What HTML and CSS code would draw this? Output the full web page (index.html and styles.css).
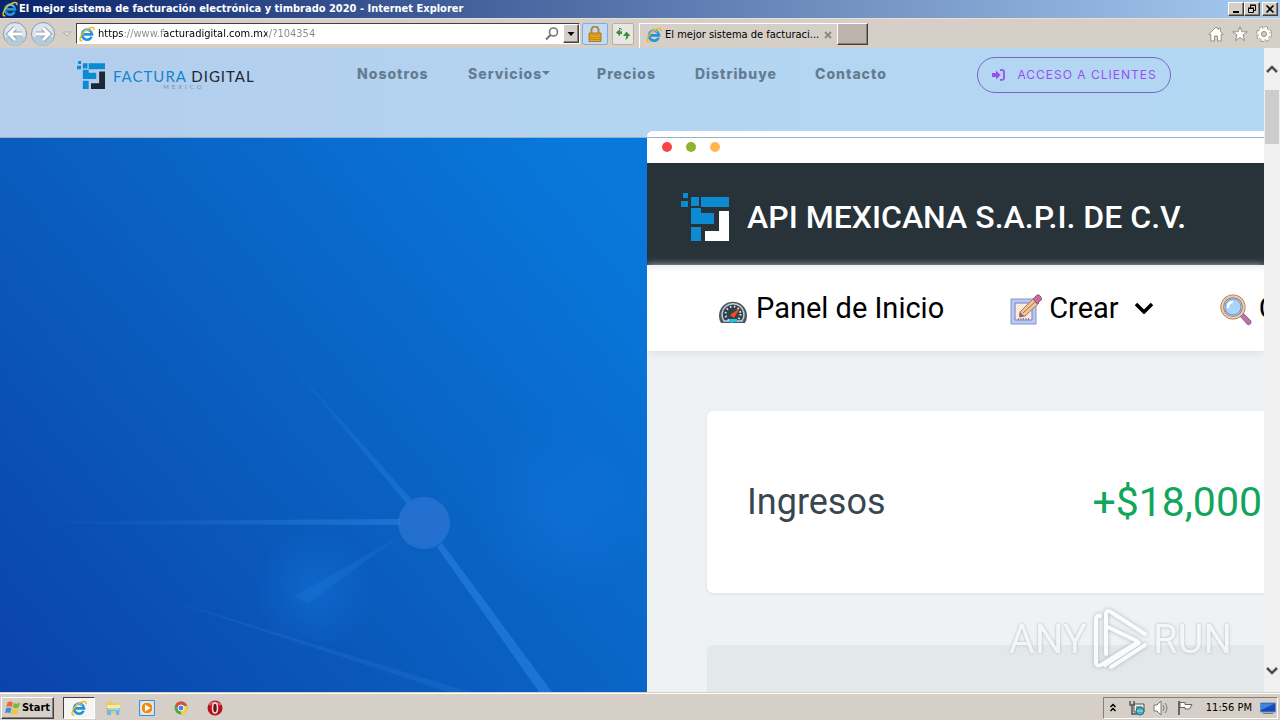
FILE: index.html
```html
<!DOCTYPE html>
<html lang="es">

<head>
    <meta charset="UTF-8">
    <meta name="viewport" content="width=device-width, initial-scale=1.0">
    <title>El mejor sistema de facturación electrónica y timbrado 2020</title>
    <link rel="stylesheet" href="styles.css">
</head>

<body>
    <svg class="sprite" aria-hidden="true">
        <symbol id="ie" viewBox="0 0 16 16">
            <path d="M12.6 10.7A5 5 0 1 1 13 8.4H4.6" fill="none" stroke="#2493d8" stroke-width="2.6"/>
            <path d="M4 6.4A4.5 4.5 0 0 1 11.500 5.200" fill="none" stroke="#8fd6f8" stroke-width="1"/>
            <path d="M3.400 14.700C-.5 15.800 .6 9.500 6.200 4.800 11 .7 16 .2 14.800 4.300" fill="none" stroke="#f0bc25" stroke-width="1.500"/>
        </symbol>
        <symbol id="fd" viewBox="0 0 48 48">
            <g fill="#0c8bd2">
                <path d="M2 0h5v5H2zM0 8h7v6H0zM10 4h8v9h-8zM20 4h28v10H20zM10 15h10v5h13v11H10zM10 34h10v14H10z"/>
            </g>
            <path class="fd-corner" d="M38 18h10v30H24V38h14z"/>
        </symbol>
    </svg>

    <div class="titlebar">
        <svg class="icon16"><use href="#ie"/></svg>
        <span class="titlebar-text">El mejor sistema de facturación electrónica y timbrado 2020 - Internet Explorer</span>
        <div class="window-buttons">
            <button class="classic" aria-label="Minimizar"><svg viewBox="0 0 14 12"><path d="M4 9h6" stroke="#000" stroke-width="2"/></svg></button>
            <button class="classic" aria-label="Restaurar"><svg viewBox="0 0 14 12"><path d="M5.500 5V2.500h5v5H9M5 2h6M3.500 5.500h5v4h-5zM3 5h6" fill="none" stroke="#000"/></svg></button>
            <button class="classic close" aria-label="Cerrar"><svg viewBox="0 0 14 12"><path d="M3.500 2.500l7 7M10.500 2.500l-7 7" stroke="#000" stroke-width="1.600"/></svg></button>
        </div>
    </div>

    <div class="toolbar">
        <div class="history">
            <button aria-label="Atrás"><svg viewBox="0 0 26 26"><circle cx="13" cy="13" r="11.500" fill="#dce5ee" stroke="#8d98a3"/><path d="M3 16a10 9 0 0 0 20 0z" fill="#b4cbd9"/><path d="M13 7l-6 6 6 6M7.500 13H20" fill="none" stroke="#8ba0b2" stroke-width="5"/><path d="M13 7l-6 6 6 6M7.500 13H20" fill="none" stroke="#fff" stroke-width="3"/></svg></button>
            <button aria-label="Adelante"><svg viewBox="0 0 26 26"><circle cx="13" cy="13" r="11.500" fill="#dce5ee" stroke="#8d98a3"/><path d="M3 16a10 9 0 0 0 20 0z" fill="#b4cbd9"/><path d="M13 7l6 6-6 6M18.500 13H6" fill="none" stroke="#8ba0b2" stroke-width="5"/><path d="M13 7l6 6-6 6M18.500 13H6" fill="none" stroke="#fff" stroke-width="3"/></svg></button>
            <button class="history-menu" aria-label="Historial"><svg viewBox="0 0 10 6"><path d="M1 1h8L5 5z" fill="#e4dee0" stroke="#b5abb0"/></svg></button>
        </div>
        <div class="address">
            <svg class="icon16"><use href="#ie"/></svg>
            <input class="url" type="text" aria-label="Dirección" value="https://www.facturadigital.com.mx/?104354">
            <svg class="icon16" viewBox="0 0 16 16"><circle cx="9.500" cy="6" r="4" fill="none" stroke="#777" stroke-width="1.600"/><path d="M6.500 9L2 13.500" stroke="#777" stroke-width="2.200"/></svg>
            <button class="classic drop" aria-label="Mostrar direcciones"><svg viewBox="0 0 14 16"><path d="M3.500 6h7L7 10z"/></svg></button>
        </div>
        <button class="tool lock" aria-label="Seguridad"><svg class="icon16" viewBox="0 0 16 16"><path d="M4.500 8V4a3.500 3.500 0 0 1 7 0v4" fill="none" stroke="#a98b3c" stroke-width="2"/><path d="M2 7h12v8.500H2z" fill="#eba91d" stroke="#9b6b12" stroke-width=".8"/><path d="M2.500 9h11M2.500 11.500h11M2.500 13.500h11" stroke="#b77a10" stroke-width=".7"/></svg></button>
        <button class="tool" aria-label="Actualizar"><svg class="icon16" viewBox="0 0 16 16"><path d="M1 6.500L5 3v2.300h2V8H5v2.300z" fill="#36913f"/><path d="M4 3l1-1 2 2" stroke="#36913f" fill="none"/><path d="M11.500 5.500L15.500 10h-2.300c.2 2-1 3.500-3.200 3.500 1-1 1.200-2 1-3.500H8z" fill="#36913f"/></svg></button>
        <div class="tab">
            <svg class="icon16"><use href="#ie"/></svg>
            <span class="tab-title">El mejor sistema de facturaci...</span>
            <button class="tab-close" aria-label="Cerrar pestaña"><svg viewBox="0 0 8 8"><path d="M1 1l6 6M7 1L1 7" stroke="#8b8783" stroke-width="1.800"/></svg></button>
        </div>
        <button class="classic new-tab" aria-label="Nueva pestaña"></button>
        <div class="tools">
            <button aria-label="Inicio"><svg class="icon16" viewBox="0 0 16 16"><path d="M8 1L.8 8.300h2V15h3.700v-5h3v5h3.700V8.300h2L12.500 5.500V2.200h-2v1.300z" fill="#fff" stroke="#8c8780" stroke-width=".9"/></svg></button>
            <button aria-label="Favoritos"><svg class="icon16" viewBox="0 0 16 16"><path d="M8 .8l1.900 5h5.400L11 9l1.600 5.700L8 11.400l-4.600 3.300L5 9 .7 5.800h5.400z" fill="#fff" stroke="#8c8780" stroke-width=".9"/></svg></button>
            <button aria-label="Herramientas"><svg class="icon16" viewBox="0 0 16 16"><circle cx="8" cy="8" r="6.200" fill="none" stroke="#8c8780" stroke-width="3.500" stroke-dasharray="2.900 1.970"/><circle cx="8" cy="8" r="6" fill="none" stroke="#fff" stroke-width="2.500" stroke-dasharray="2.300 2.410"/><circle cx="8" cy="8" r="4" fill="#d6cfc7" stroke="#fff" stroke-width="3"/><circle cx="8" cy="8" r="2.500" fill="none" stroke="#8c8780"/></svg></button>
        </div>
    </div>

    <div class="viewport">
        <div class="page">
            <header class="site-header">
                <a class="brand" href="#">
                    <svg class="brand-mark"><use href="#fd"/></svg>
                    <span class="brand-name"><span class="brand-blue">FACTURA</span> DIGITAL<small>MEXICO</small></span>
                </a>
                <nav class="site-nav">
                    <a href="#">Nosotros</a>
                    <a class="has-menu" href="#">Servicios</a>
                    <a href="#">Precios</a>
                    <a href="#">Distribuye</a>
                    <a href="#">Contacto</a>
                </nav>
                <a class="login" href="#">
                    <svg viewBox="0 0 14 12"><path d="M1 4h4V1.500L9.500 6 5 10.500V8H1z" fill="#9a4df0"/><path d="M9 1.200h2.500q1.500 0 1.500 1.500v6.600q0 1.500-1.500 1.500H9" fill="none" stroke="#9a4df0" stroke-width="1.800"/></svg>
                    ACCESO A CLIENTES
                </a>
            </header>

            <main class="hero">
                <svg class="network" viewBox="0 138 647 554" preserveAspectRatio="xMidYMid slice" aria-hidden="true">
                    <defs>
                        <linearGradient id="fadeLeft" gradientUnits="userSpaceOnUse" x1="40" y1="0" x2="400" y2="0"><stop offset="0" stop-color="#2e86e0" stop-opacity="0"/><stop offset="1" stop-color="#2e86e0" stop-opacity=".5"/></linearGradient>
                        <linearGradient id="fadeUp" gradientUnits="userSpaceOnUse" x1="270" y1="340" x2="410" y2="505"><stop offset="0" stop-color="#2e86e0" stop-opacity="0"/><stop offset="1" stop-color="#2e86e0" stop-opacity=".4"/></linearGradient>
                        <radialGradient id="glow"><stop offset="0" stop-color="#1274da" stop-opacity=".5"/><stop offset="1" stop-color="#1274da" stop-opacity="0"/></radialGradient>
                    </defs>
                    <circle cx="565" cy="510" r="90" fill="url(#glow)"/>
                    <circle cx="315" cy="590" r="60" fill="url(#glow)"/>
                    <path d="M30 521.500L400 519v6L30 524z" fill="url(#fadeLeft)"/>
                    <path d="M270 340l142 160-5 4z" fill="url(#fadeUp)"/>
                    <path d="M402 535L295 596l12 8z" fill="#2e86e0" opacity=".2"/>
                    <path d="M160 597l310 95h-22z" fill="#2e86e0" opacity=".22"/>
                    <path d="M437 547l5-4 110 149h-13z" fill="#2882e2" opacity=".6"/>
                    <circle cx="424" cy="523" r="26" fill="#3b7ddb" opacity=".5"/>
                </svg>

                <section class="app">
                    <div class="app-dots"><i class="red"></i><i class="green"></i><i class="amber"></i></div>
                    <div class="app-head">
                        <svg class="app-logo"><use href="#fd"/></svg>
                        <h2>API MEXICANA S.A.P.I. DE C.V.</h2>
                    </div>
                    <div class="app-menu">
                        <a href="#">
                            <svg class="menu-icon" viewBox="0 0 32 32"><path d="M4 29a14 14 0 1 1 24 0z" fill="#465a65"/><path d="M7 27a11 11 0 1 1 18 0z" fill="#33434c" stroke="#c7d0d5" stroke-width="1.500"/><circle cx="16" cy="20" r="7.500" fill="none" stroke="#dbe3e7" stroke-width="2" stroke-dasharray="1.500 2.500"/><path d="M13 21l10-7-6 10z" fill="#f4511e"/><path d="M12 25h8v3h-8z" fill="#18c5e8"/></svg>
                            Panel de Inicio
                        </a>
                        <a href="#">
                            <svg class="menu-icon" viewBox="0 0 32 32"><path d="M1 5h25v25H1z" fill="#bac8f4" stroke="#8792c8"/><path d="M5 9h17v17H5z" fill="#fbe9dc" stroke="#7180bf"/><path d="M8 25h12" stroke="#7180bf" stroke-dasharray="1 1.500" stroke-width="2"/><path d="M10 18L24 4l5 5-14 13-5 1z" fill="#eec98e" stroke="#a36f68"/><path d="M23 5l4-4q2-1 4 2t-1 4l-3 3z" fill="#c66f95" stroke="#9c5b87"/><path d="M13 19L26 7" stroke="#a36f68"/><path d="M10 18l4 4-5 1z" fill="#9c5b70"/></svg>
                            Crear
                            <svg class="chevron" viewBox="0 0 20 12"><path d="M2 2l8 8 8-8" fill="none" stroke="#000" stroke-width="3.500"/></svg>
                        </a>
                        <a href="#">
                            <svg class="menu-icon" viewBox="0 0 32 32"><path d="M20 22l3-3 8 8q1 3-3 4z" fill="#b978a3" stroke="#8d659a"/><circle cx="13" cy="13" r="10.800" fill="#a8d5fb" stroke="#9b7065" stroke-width="3.500"/><circle cx="13" cy="13" r="10.800" fill="none" stroke="#f3cba7" stroke-width="2"/><circle cx="13" cy="13" r="8" fill="none" stroke="#7895cd"/><path d="M8 14a5 5 0 0 1 5-6" stroke="#fff" stroke-width="2.500" fill="none"/></svg>
                            Consultar
                        </a>
                    </div>
                    <div class="app-body">
                        <div class="card">
                            <span>Ingresos</span>
                            <strong>+$18,000</strong>
                        </div>
                        <div class="card card-muted"></div>
                    </div>
                </section>
            </main>

            <div class="watermark">
                <span>ANY</span>
                <svg viewBox="0 0 60 64"><path d="M15 57L49 35M10 8q-4-1-4 4v42q0 5 5 3l37-23M16 46V7q0-6 5-3l34 22M16 18l31 15M21 59l34-22" fill="none" stroke="#fff" stroke-width="4" stroke-linecap="round"/></svg>
                <span>RUN</span>
            </div>
        </div>

        <div class="scrollbar">
            <button aria-label="Subir"><svg viewBox="0 0 12 8"><path d="M1 7l5-5 5 5" fill="none" stroke="#505050" stroke-width="2.500"/></svg></button>
            <div class="track"><div class="thumb"></div></div>
            <button aria-label="Bajar"><svg viewBox="0 0 12 8"><path d="M1 1l5 5 5-5" fill="none" stroke="#505050" stroke-width="2.500"/></svg></button>
        </div>
    </div>

    <footer class="taskbar">
        <button class="classic start">
            <svg class="icon16" viewBox="0 0 16 16"><path d="M2.500 2.500q2.500-2 5.500 0L6.800 7q-2.800-1.500-5.500 0z" fill="#ee6b2d"/><path d="M9 3q3 1.500 6-.5L13.700 7.300q-3 1.800-6 .2z" fill="#78b83e"/><path d="M1 8.300q2.700-1.700 5.500 0l-1.300 4.900q-2.700-1.600-5.200 0z" fill="#3c8ddd"/><path d="M7.500 8.800q3 1.500 6-.2l-1.300 4.900q-3 1.700-6 .2z" fill="#f8c52c"/></svg>
            Start
        </button>
        <div class="launch">
            <button class="active" aria-label="Internet Explorer"><svg class="icon16"><use href="#ie"/></svg></button>
            <button aria-label="Explorador"><svg class="icon16" viewBox="0 0 16 16"><path d="M1 3l5-2 2 2h6v10H1z" fill="#eccb62"/><path d="M2 5h13v6H2z" fill="#f8e9a5"/><path d="M2 8h13l-1 7h-3v-4H6v4H2z" fill="#71b9dc"/><path d="M3 9h11" stroke="#d8f2fb"/></svg></button>
            <button aria-label="Reproductor"><svg class="icon16" viewBox="0 0 16 16"><path d="M.5.500h15v15H.5z" fill="#c8e2f8" stroke="#4b8bc6"/><circle cx="8" cy="8" r="6" fill="#f58a13" stroke="#fff"/><path d="M6 4.500v7L11.500 8z" fill="#fff"/></svg></button>
            <button aria-label="Chrome"><svg class="icon16" viewBox="0 0 16 16"><circle cx="8" cy="8" r="6.500" fill="#4ba94b"/><path d="M8 8h6.500q0 6-6.500 6.500z" fill="#f8cf35"/><path d="M2.400 4.700A6.500 6.500 0 0 1 14 5.500H8L5 9z" fill="#dd4b3e"/><path d="M14.200 6H8v8.500A6.500 6.500 0 0 0 14.200 6z" fill="#f8cf35"/><circle cx="8" cy="8" r="3" fill="#4285f4" stroke="#fff"/></svg></button>
            <button aria-label="Opera"><svg class="icon16" viewBox="0 0 16 16"><ellipse cx="8" cy="8" rx="7.500" ry="7.500" fill="#b5131b"/><path d="M2 5q5-5 12 0" fill="none" stroke="#de686d" stroke-width="2"/><ellipse cx="8" cy="8" rx="2.500" ry="5" fill="#731014" stroke="#f5dede" stroke-width="1.500"/></svg></button>
        </div>
        <div class="tray">
            <button aria-label="Mostrar iconos ocultos"><svg class="icon16" viewBox="0 0 16 16"><path d="M5.500 7L8 4.500 10.500 7M5.500 11L8 8.500l2.500 2.500" fill="none" stroke="#000" stroke-width="1.500"/></svg></button>
            <svg class="icon16" viewBox="0 0 16 16"><path d="M5 4h10v8H5z" fill="#eee" stroke="#555"/><path d="M7 6h6v4H7z" fill="#8ab"/><path d="M1 1v4h4V1M3 5v9h5" fill="none" stroke="#555" stroke-width="1.500"/><circle cx="11" cy="11" r="4" fill="#43adb9" stroke="#26717c"/><path d="M8 11h6" stroke="#a7edee"/></svg>
            <svg class="icon16" viewBox="0 0 16 16"><path d="M1 5h3l4-4v14l-4-4H1z" fill="#fff" stroke="#777"/><path d="M10 5q2 3 0 6M12 3q4 5 0 10" fill="none" stroke="#777"/></svg>
            <svg class="icon16" viewBox="0 0 16 16"><path d="M2 1v14" stroke="#666" stroke-width="2"/><path d="M3 2.500h5v2h7L12.500 9H8V7.500H3z" fill="#fff" stroke="#666"/></svg>
            <time class="clock">11:56 PM</time>
            <svg class="icon16" viewBox="0 0 16 16"><path d="M.5 3h15v9H.5z" fill="#1748b4" stroke="#5b8dd0"/><path d="M1 4h13L1 10z" fill="#3f83dc"/><path d="M3 13.500h10" stroke="#777"/></svg>
        </div>
    </footer>
</body>

</html>
```

FILE: styles.css
```css
:root {
    --face: #d6cfc7;
    --ui: "DejaVu Sans Condensed", "Noto Sans", sans-serif;
    --site: Inter, "Open Sans", sans-serif;
    --app: Roboto, "Liberation Sans", sans-serif;
    --dark: #283239;
    --blue: #0c8bd2;
    --violet: #9a4df0;
}

* {
    box-sizing: border-box;
}

body {
    display: flex;
    flex-direction: column;
    height: 100vh;
    margin: 0;
    overflow: hidden;
    background: var(--face);
    color: #000;
    font: 11px/16px var(--ui);
}

button {
    display: flex;
    align-items: center;
    justify-content: center;
    padding: 0;
    border: 0;
    background: none;
    color: inherit;
    font: inherit;
}

a {
    color: inherit;
    text-decoration: none;
}

svg {
    display: block;
    flex: none;
}

.sprite {
    position: absolute;
    width: 0;
    height: 0;
}

.icon16 {
    width: 16px;
    height: 16px;
}

.classic {
    border: 1px solid;
    border-color: #fff #404040 #404040 #fff;
    box-shadow: inset -1px -1px #888078;
    background: var(--face);
}

/* Title bar */
.titlebar {
    display: flex;
    align-items: center;
    gap: 1px;
    height: 18px;
    padding: 0 2px;
    background: linear-gradient(to right, #0a246a, #a6caf0);
    color: #fff;
    font-weight: bold;
}

.titlebar-text {
    flex: 1;
    overflow: hidden;
    white-space: nowrap;
}

.window-buttons {
    display: flex;
}

.window-buttons button {
    width: 16px;
    height: 14px;
}

.window-buttons svg {
    width: 14px;
    height: 12px;
}

.window-buttons .close {
    margin-left: 2px;
}

/* Toolbar */
.toolbar {
    display: flex;
    align-items: center;
    height: 30px;
    padding: 0 8px 0 2px;
    border-top: 1px solid #e5dfd8;
}

.history {
    display: flex;
    align-items: center;
    gap: 2px;
    width: 74px;
}

.history svg {
    width: 26px;
    height: 26px;
}

.history-menu svg {
    width: 10px;
    height: 6px;
    margin-left: 4px;
}

.address {
    display: flex;
    flex: 0 1 504px;
    align-items: center;
    gap: 3px;
    height: 21px;
    padding-left: 2px;
    border: 1px solid;
    border-color: #404040 #fff #fff #404040;
    background: #fff;
}

/* the host name is darker than the rest of the address */
.url {
    flex: 1;
    min-width: 0;
    padding: 0;
    border: 0;
    outline: 0;
    background: linear-gradient(to right, #000 26px, #888 26px, #888 65px, #000 65px, #000 169px, #888 169px);
    -webkit-background-clip: text;
    background-clip: text;
    -webkit-text-fill-color: transparent;
    font: 11px/16px var(--ui);
}

.drop {
    width: 16px;
    height: 19px;
}

.drop svg {
    width: 14px;
    height: 16px;
}

.tool {
    width: 22px;
    height: 22px;
    margin-left: 4px;
    border: 1px solid #b5b0aa;
    border-radius: 2px;
    background: #e9e6e2;
}

.lock {
    width: 26px;
    margin-left: 2px;
    border-color: #7eaee0;
    background: #c3daf3;
}

.tab {
    display: flex;
    flex: 0 1 198px;
    align-items: center;
    gap: 3px;
    align-self: flex-end;
    height: 25px;
    margin-left: 5px;
    padding: 0 5px 3px 6px;
    border-left: 1px solid #fff;
    border-top: 1px solid #fff;
}

.tab-title {
    flex: 1;
    overflow: hidden;
    white-space: nowrap;
}

.tab-close svg {
    width: 8px;
    height: 8px;
}

.new-tab {
    width: 31px;
    height: 22px;
    background: #bdb5ad;
}

.tools {
    display: flex;
    gap: 8px;
    margin-left: auto;
}

/* Page */
.viewport {
    display: flex;
    flex: 1;
    min-height: 0;
}

.page {
    position: relative;
    display: flex;
    flex: 1;
    flex-direction: column;
    min-width: 0;
    overflow: hidden;
}

.site-header {
    position: relative;
    display: flex;
    align-items: flex-start;
    justify-content: space-between;
    height: 90px;
    padding: 9px 93px 0 77px;
    background: linear-gradient(to right, #b3cdec, #b3d5f2 50%, #b3d8f3);
    font-family: var(--site);
}

/* hairline runs across the app window too */
.site-header::after {
    content: "";
    position: absolute;
    z-index: 2;
    right: 0;
    bottom: 0;
    left: 0;
    height: 1px;
    background: #9ab0bd;
}

.brand {
    display: flex;
    align-items: center;
    gap: 8px;
    width: 280px;
    height: 36px;
}

.brand-mark {
    width: 28px;
    height: 28px;
    color: #1d2733;
}

.fd-corner {
    fill: currentColor;
}

.brand-name {
    padding-top: 8px;
    color: #1d2733;
    font: 15px/16px Lato, sans-serif;
    letter-spacing: 1px;
}

.brand-blue {
    color: #1585cf;
}

.brand-name small {
    display: block;
    color: #7890a5;
    font-size: 6px;
    line-height: 6px;
    letter-spacing: 3px;
    text-align: center;
}

.site-nav {
    display: grid;
    flex: 1;
    grid-template-columns: 111px 129px 98px 120px auto;
    color: #647c91;
    font-size: 14px;
    font-weight: 800;
    line-height: 34px;
    letter-spacing: 1px;
    white-space: nowrap;
}

.has-menu::after {
    content: "";
    display: inline-block;
    border: 4px solid transparent;
    border-top-color: currentColor;
    border-bottom: 0;
    vertical-align: 4px;
}

.login {
    display: flex;
    align-items: center;
    justify-content: center;
    gap: 12px;
    width: 194px;
    height: 36px;
    border: 1px solid #7a63cf;
    border-radius: 18px;
    color: var(--violet);
    font-size: 12px;
    letter-spacing: 1px;
    white-space: nowrap;
}

.login svg {
    width: 14px;
    height: 12px;
}

.hero {
    display: grid;
    flex: 1;
    grid-template-columns: 647fr 617fr;
    min-height: 0;
    background: linear-gradient(50deg, #0b43aa, #0a5fc0 30%, #0878dc 60%);
}

.network {
    width: 100%;
    height: 100%;
    min-height: 0;
}

.app {
    position: relative;
    z-index: 1;
    display: flex;
    flex-direction: column;
    min-width: 0;
    margin-top: -7px;
    overflow: hidden;
    border-top-left-radius: 6px;
    background: #eef2f5;
    font-family: var(--app);
    white-space: nowrap;
}

.app-dots {
    display: flex;
    align-items: center;
    gap: 14px;
    height: 32px;
    padding-left: 15px;
    background: #fff;
}

.app-dots i {
    width: 10px;
    height: 10px;
    border-radius: 50%;
}

.red {
    background: #fb4447;
}

.green {
    background: #8bb52b;
}

.amber {
    background: #ffb74d;
}

.app-head {
    display: flex;
    align-items: center;
    gap: 18px;
    height: 102px;
    padding: 6px 34px 0;
    background: var(--dark);
    color: #fff;
}

.app-logo {
    width: 48px;
    height: 48px;
}

.app-head h2 {
    margin: 0;
    font-size: 32px;
    font-weight: 500;
    line-height: 40px;
}

.app-menu {
    display: flex;
    align-items: center;
    gap: 66px;
    height: 86px;
    padding-left: 70px;
    background: linear-gradient(#f0f0f4, #fff 8px);
    box-shadow: 0 1px 8px #d5dce1;
    color: #000;
    font-size: 29px;
    line-height: 36px;
}

.app-menu a {
    display: flex;
    flex: none;
    align-items: center;
    gap: 7px;
}

.menu-icon {
    width: 32px;
    height: 32px;
    margin-top: 4px;
}

.chevron {
    width: 20px;
    height: 12px;
    margin-left: 8px;
}

.app-body {
    display: flex;
    flex: 1;
    flex-direction: column;
    gap: 52px;
    min-height: 0;
    padding: 60px 0 0 60px;
}

.card {
    display: flex;
    flex: none;
    align-items: center;
    justify-content: space-between;
    height: 182px;
    padding: 0 2px 0 40px;
    border-radius: 6px 0 0 6px;
    background: #fff;
    box-shadow: 0 1px 3px #d9e0e4;
    color: #37474f;
    font-size: 36px;
    line-height: 44px;
}

.card strong {
    color: #12a55c;
    font-size: 41px;
    font-weight: 400;
}

.card-muted {
    background: #e3e8eb;
    box-shadow: none;
}

.watermark {
    position: absolute;
    z-index: 3;
    right: 32px;
    bottom: 20px;
    display: flex;
    align-items: center;
    gap: 3px;
    color: #f6f8f9;
    font: 40px/64px "Liberation Sans Narrow", Roboto, sans-serif;
    text-shadow: 0 0 3px #9da5aa;
    opacity: .8;
}

.watermark svg {
    width: 60px;
    height: 64px;
    filter: drop-shadow(0 0 2px #9da5aa);
}

.scrollbar {
    display: flex;
    flex-direction: column;
    width: 16px;
    background: #f0f0f0;
}

.scrollbar button {
    height: 42px;
}

.scrollbar svg {
    width: 12px;
    height: 8px;
}

.track {
    flex: 1;
}

.thumb {
    height: 54px;
    margin: 0 1px;
    background: #cdcdcd;
}

/* Taskbar */
.taskbar {
    display: flex;
    align-items: center;
    height: 28px;
    padding: 2px 2px 0 1px;
    border-top: 1px solid var(--face);
    box-shadow: inset 0 1px #fff;
}

.start {
    gap: 1px;
    width: 53px;
    height: 22px;
    font-weight: bold;
}

.launch {
    display: flex;
    gap: 2px;
    margin-left: 9px;
}

.launch button {
    width: 32px;
    height: 22px;
}

.launch .active {
    border: 1px solid;
    border-color: #404040 #fff #fff #404040;
    background: #f7f5f3;
}

.tray {
    display: flex;
    align-items: center;
    gap: 8px;
    height: 22px;
    margin-left: auto;
    padding: 0 1px;
    border: 1px solid;
    border-color: #888078 #fff #fff #888078;
}

.clock {
    margin-left: 5px;
}
```
